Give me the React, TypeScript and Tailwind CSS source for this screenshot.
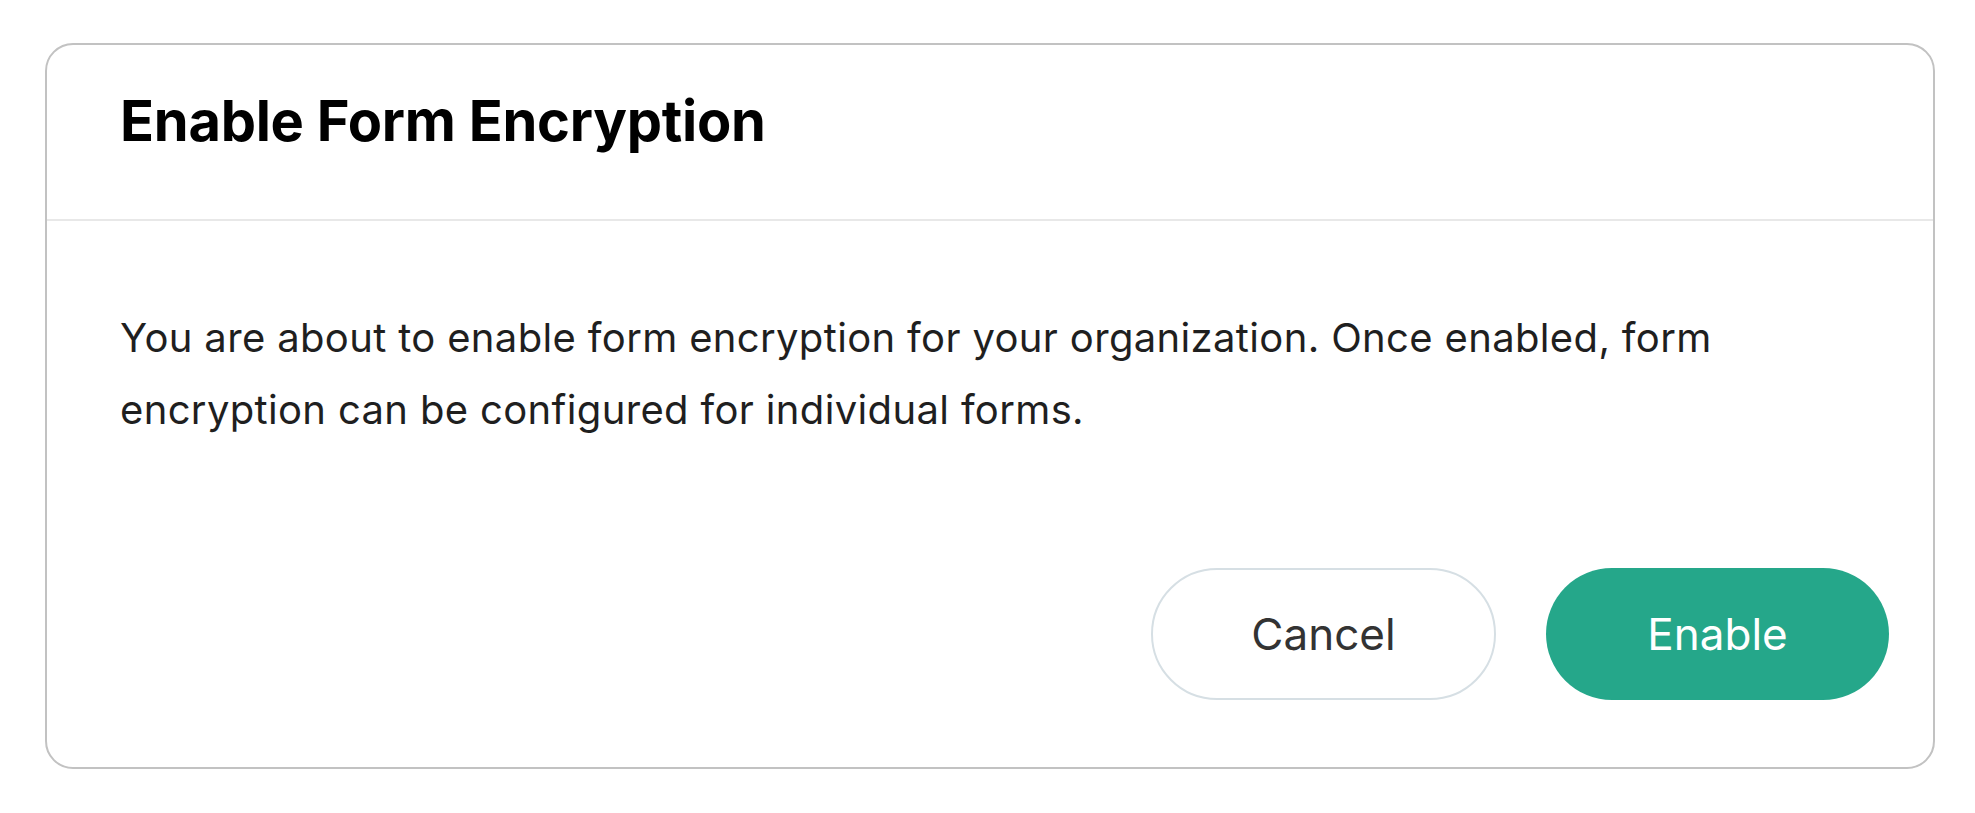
export default function App() {
  return (
    <main className="min-h-screen bg-white pl-[45px] pt-[43px] font-['Inter',sans-serif]">
      <div className="w-[1890px] rounded-[28px] border-2 border-[#c2c2c2] bg-white">
        {/* Header */}
        <div className="border-b-2 border-[#e8e8e8] pl-[73px] pt-[43px] pb-[64px]">
          <h2 className="text-[56px] font-bold leading-[67px] tracking-[-0.25px] text-black">Enable Form Encryption</h2>
        </div>

        {/* Body */}
        <div className="pl-[73px] pr-[44px] pt-[81px] pb-[67px]">
          <p className="text-[40px] leading-[72px] tracking-[0.35px] text-[#1f1f1f]">
            You are about to enable form encryption for your organization. Once enabled, form
            encryption can be configured for individual forms.
          </p>

          <div className="mt-[122px] flex justify-end gap-[50px]">
            <button className="flex h-[132px] w-[345px] items-center justify-center rounded-full border-2 border-[#d6dfe4] bg-white text-[44px] text-[#333]">
              Cancel
            </button>
            <button className="flex h-[132px] w-[343px] items-center justify-center rounded-full bg-[#25a78a] text-[44px] text-white">
              Enable
            </button>
          </div>
        </div>
      </div>
    </main>
  )
}
